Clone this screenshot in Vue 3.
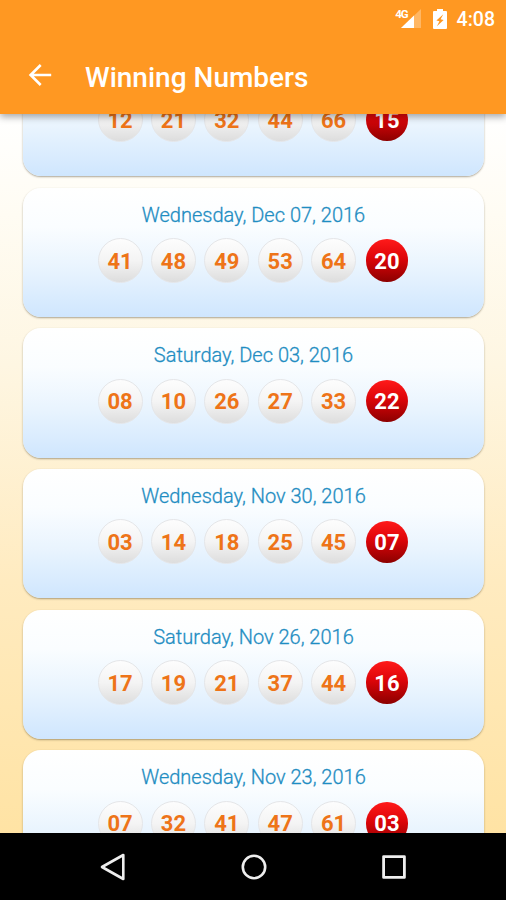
<template>
  <div class="screen">
    <header class="app-header">
      <div class="status-bar">
        <div class="network">
          <span class="network-type">4G</span>
          <svg class="signal-icon" width="20" height="19" viewBox="0 0 20 19">
            <path d="M20 0v19H0z" fill="#fff" fill-opacity="0.3" />
            <path d="M13 6.500V19H0z" fill="#fff" />
          </svg>
        </div>
        <svg class="battery-icon" width="14" height="20" viewBox="0 0 14 20">
          <path d="M4 0h6v2H13a1 1 0 0 1 1 1v16a1 1 0 0 1-1 1H1a1 1 0 0 1-1-1V3a1 1 0 0 1 1-1h3z" fill="#fff" />
          <path d="M10.300 5.200L3.400 11.400l3 .9-2.500 5 6.700-6.200-3-.9z" fill="#ff9822" />
        </svg>
        <span class="clock">4:08</span>
      </div>
      <div class="toolbar">
        <button type="button" class="back-btn" aria-label="Back">
          <svg width="24" height="24" viewBox="0 0 24 24" fill="none" stroke="#fff" stroke-width="2.600">
            <path d="M23.200 12H2.500M12.700 2L2.600 12l10.100 10" />
          </svg>
        </button>
        <h1 class="title">Winning Numbers</h1>
      </div>
    </header>

    <main class="content">
      <ul class="draw-list">
        <li v-for="(draw, index) in draws" :key="index" class="draw-card">
          <div class="draw-date">{{ draw.date }}</div>
          <div class="balls">
            <span v-for="number in draw.numbers" :key="number" class="ball">{{ number }}</span>
            <span class="ball ball-power">{{ draw.power }}</span>
          </div>
        </li>
      </ul>
    </main>

    <nav class="nav-bar">
      <svg width="28" height="28" viewBox="0 0 28 28" fill="none" stroke="#eee" stroke-width="2.600" stroke-linejoin="round">
        <path d="M24.300 2v24L3 14z" />
      </svg>
      <svg width="28" height="28" viewBox="0 0 28 28" fill="none" stroke="#eee" stroke-width="2.600">
        <circle cx="14" cy="14" r="11.200" />
      </svg>
      <svg width="28" height="28" viewBox="0 0 28 28" fill="none" stroke="#eee" stroke-width="2.800" stroke-linejoin="round">
        <rect x="3.600" y="3.600" width="20.800" height="20.800" />
      </svg>
    </nav>
  </div>
</template>

<script setup>
import { ref } from 'vue';

const draws = ref([
  { date: '', numbers: ['12', '21', '32', '44', '66'], power: '15' },
  { date: 'Wednesday, Dec 07, 2016', numbers: ['41', '48', '49', '53', '64'], power: '20' },
  { date: 'Saturday, Dec 03, 2016', numbers: ['08', '10', '26', '27', '33'], power: '22' },
  { date: 'Wednesday, Nov 30, 2016', numbers: ['03', '14', '18', '25', '45'], power: '07' },
  { date: 'Saturday, Nov 26, 2016', numbers: ['17', '19', '21', '37', '44'], power: '16' },
  { date: 'Wednesday, Nov 23, 2016', numbers: ['07', '32', '41', '47', '61'], power: '03' }
]);
</script>

<style>
body {
  margin: 0;
}
</style>

<style scoped>
.screen {
  display: flex;
  flex-direction: column;
  height: 900px;
  overflow: hidden;
  font-family: Roboto, "Liberation Sans", sans-serif;
}

.app-header {
  position: relative; /* keeps the shadow above the list */
  z-index: 1;
  flex: none;
  height: 114px;
  background-color: #ff9822;
  box-shadow: 0 3px 7px rgba(0, 0, 0, 0.34);
  color: #fff;
}

.status-bar {
  display: flex;
  justify-content: flex-end;
  align-items: center;
  height: 38px;
  padding-right: 11px;
}

.network {
  display: flex;
  align-items: flex-start;
  height: 20px;
}

.network-type {
  margin-right: -7px;
  font-size: 11.500px;
  font-weight: 700;
  line-height: 10px;
  letter-spacing: -1px;
}

.battery-icon {
  margin: 0 10px 0 12px;
}

.clock {
  font-size: 19.500px;
  font-weight: 500;
}

.toolbar {
  display: flex;
  align-items: center;
  height: 76px;
  padding-left: 28px;
}

.back-btn {
  display: flex;
  padding: 0;
  margin-right: 33px;
  margin-bottom: 2px;
  border: none;
  background: none;
}

.title {
  margin: 0 0 -3px;
  font-size: 28px;
  font-weight: 500;
  line-height: 32px;
}

.content {
  flex: 1;
  min-height: 0;
  overflow: hidden;
  background: linear-gradient(#ffffff 0%, #fffcf3 14%, #fef6e2 35%, #ffebc0 65%, #ffe3a4 100%);
}

/* List is scrolled part of the way down */
.draw-list {
  display: flex;
  flex-direction: column;
  gap: 11.200px;
  margin: -67.200px 22px 0 23px;
  padding: 0;
  list-style: none;
}

.draw-card {
  box-sizing: border-box;
  flex: none;
  height: 129.500px;
  padding-top: 15px;
  border-radius: 18px;
  background: linear-gradient(#ffffff 0%, #fafdff 30%, #e9f4fe 62%, #cfe6fe 100%);
  box-shadow: 0 1px 2px rgba(70, 60, 30, 0.45);
}

.draw-date {
  height: 24px;
  color: #1f8dc2;
  font-size: 20px;
  font-weight: 300;
  line-height: 24px;
  text-align: center;
  -webkit-text-stroke: 0.3px #1f8dc2; /* light weight alone is too thin on the card */
}

.balls {
  display: flex;
  justify-content: center;
  gap: 8.400px;
  margin-top: 11.500px;
}

.ball {
  box-sizing: border-box;
  display: flex;
  align-items: center;
  justify-content: center;
  width: 45px;
  height: 45px;
  padding-top: 1px;
  border: 1px solid #e5e6e8;
  border-radius: 50%;
  background: linear-gradient(#fdfdfd 0%, #f4f4f4 50%, #dddddd 100%);
  color: #ee7418;
  font-size: 22px;
  font-weight: 700;
}

.ball-power {
  width: 42.500px;
  height: 42.500px;
  margin: 1.250px;
  border: none;
  background: linear-gradient(#ff1a1a 0%, #dd0509 45%, #8c0000 100%);
  color: #fff;
}

.nav-bar {
  flex: none;
  display: flex;
  justify-content: center;
  align-items: center;
  gap: 112.500px;
  height: 67px;
  padding-left: 1px;
  background-color: #000;
}
</style>
